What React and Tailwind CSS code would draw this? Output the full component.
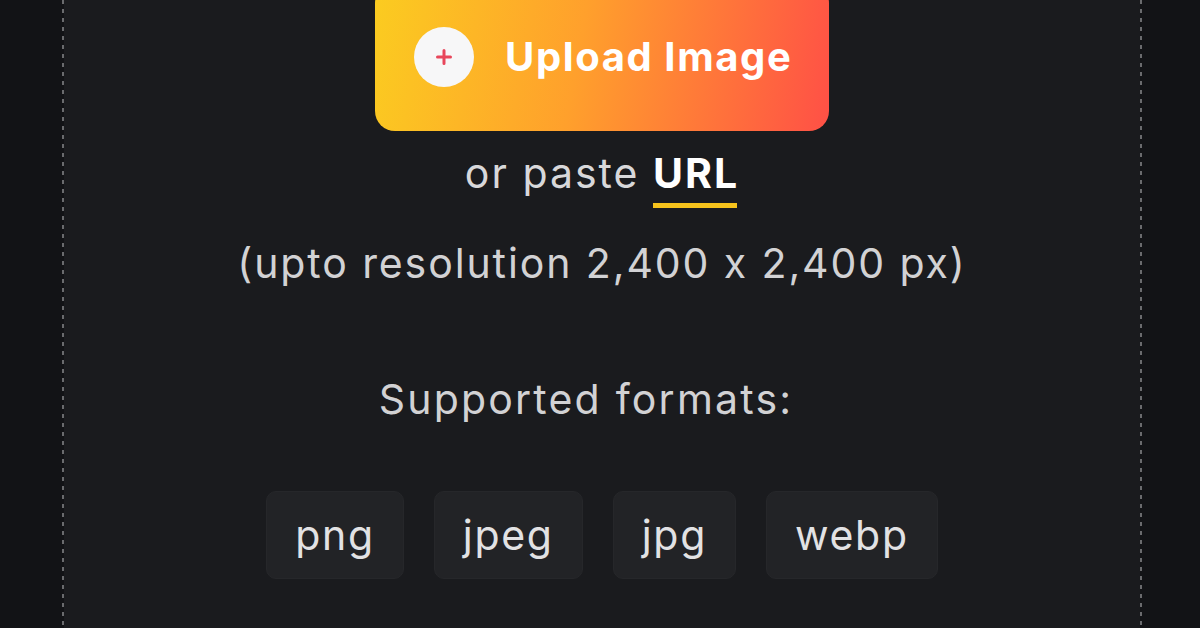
export default function App() {
  const font = { fontFamily: "Inter, 'Noto Sans', sans-serif" };
  const dash =
    "w-[2px] self-stretch bg-[linear-gradient(to_bottom,#6a6b6e_0_4px,transparent_4px_9px)] bg-[length:2px_9px] bg-repeat-y";
  const chips = ["png", "jpeg", "jpg", "webp"];
  return (
    <div className="h-[628px] w-[1200px] overflow-hidden bg-[#121316] flex" style={font}>
      <div className="w-[62px] shrink-0" />
      <div className={dash} />
      <div className="flex-1 bg-[#1a1b1e] flex flex-col items-center">
        <button className="mt-[-17px] h-[148px] w-[454px] rounded-[20px] bg-[linear-gradient(100deg,#fbcc20_0%,#ffa02c_45%,#ff5046_100%)] flex items-center pl-[39px] gap-[31px]">
          <span className="w-[60px] h-[60px] rounded-full bg-[#f7f7f8] flex items-center justify-center">
            <svg width="16" height="16" viewBox="0 0 16 16">
              <path d="M8 1.5v13M1.5 8h13" stroke="#e8465b" strokeWidth="3" strokeLinecap="round" />
            </svg>
          </span>
          <span className="text-white font-bold text-[40px] tracking-[1.6px] leading-none">Upload Image</span>
        </button>
        <div className="mt-[22px] flex items-baseline text-[41px] leading-none text-[#d8d8da] tracking-[2px]">
          <span>or paste&nbsp;</span>
          <span className="relative font-bold text-white">
            URL
            <span className="absolute left-0 right-[2px] bottom-[-14px] h-[5px] bg-[#f6c31c]" />
          </span>
        </div>
        <div className="mt-[49px] text-[41px] leading-none text-[#d2d2d4] tracking-[1.9px]">
          (upto resolution 2,400 x 2,400 px)
        </div>
        <div className="mt-[95px] pr-[32px] text-[41px] leading-none text-[#d2d2d4] tracking-[2.2px]">
          Supported formats:
        </div>
        <div className="mt-[71px] flex gap-[30px]">
          {chips.map((c) => (
            <div
              key={c}
              className="h-[88px] px-[28px] rounded-[10px] bg-[#222326] border border-[#26272a] flex items-center text-[41px] text-[#e2e2e4] leading-none tracking-[1.7px]"
            >
              {c}
            </div>
          ))}
        </div>
      </div>
      <div className={dash} />
      <div className="w-[58px] shrink-0" />
    </div>
  );
}
